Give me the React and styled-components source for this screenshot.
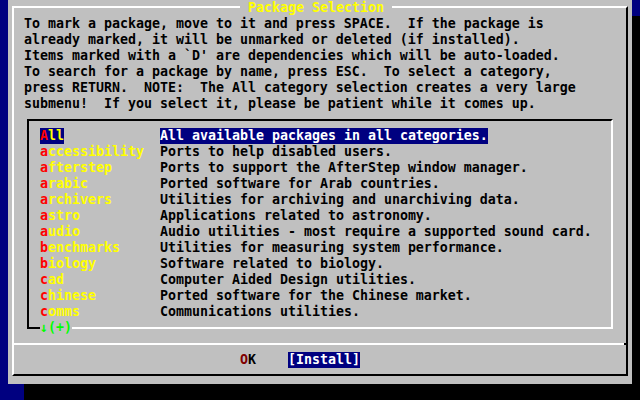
import React from 'react'
import styled, { createGlobalStyle } from 'styled-components'

const prompt = [
	'To mark a package, move to it and press SPACE.  If the package is',
	'already marked, it will be unmarked or deleted (if installed).',
	"Items marked with a `D' are dependencies which will be auto-loaded.",
	'To search for a package by name, press ESC.  To select a category,',
	'press RETURN.  NOTE:  The All category selection creates a very large',
	'submenu!  If you select it, please be patient while it comes up.'
]

const categories = [
	{ name: 'All', desc: 'All available packages in all categories.', selected: true },
	{ name: 'accessibility', desc: 'Ports to help disabled users.' },
	{ name: 'afterstep', desc: 'Ports to support the AfterStep window manager.' },
	{ name: 'arabic', desc: 'Ported software for Arab countries.' },
	{ name: 'archivers', desc: 'Utilities for archiving and unarchiving data.' },
	{ name: 'astro', desc: 'Applications related to astronomy.' },
	{ name: 'audio', desc: 'Audio utilities - most require a supported sound card.' },
	{ name: 'benchmarks', desc: 'Utilities for measuring system performance.' },
	{ name: 'biology', desc: 'Software related to biology.' },
	{ name: 'cad', desc: 'Computer Aided Design utilities.' },
	{ name: 'chinese', desc: 'Ported software for the Chinese market.' },
	{ name: 'comms', desc: 'Communications utilities.' }
]

export default function App () {
	return (
		<>
			<GlobalStyle />
			<Screen>
				<Dialog>
					<Frame>
						<Title> Package Selection </Title>
						<Prompt>{prompt.join('\n')}</Prompt>
						<ListBox>
							{categories.map(cat =>
								<Item key={cat.name}>
									<Name selected={cat.selected}>
										<Key>{cat.name[0]}</Key>{cat.name.slice(1)}
									</Name>
									<Desc selected={cat.selected}>{cat.desc}</Desc>
								</Item>
							)}
							<More>↓(+)</More>
						</ListBox>
						<Separator />
						<Buttons>
							<Button><HotKey>O</HotKey>K</Button>
							<Button active>[Install]</Button>
						</Buttons>
					</Frame>
				</Dialog>
			</Screen>
		</>
	)
}

const navy = '#000080'
const gray = '#c0c0c0'

const GlobalStyle = createGlobalStyle`
	body {
		margin: 0;
		background: ${navy};
	}
	* {
		box-sizing: border-box;
	}
`

const Screen = styled.div`
	width: 640px;
	height: 400px;
	overflow: hidden;
	background: ${navy};
	font-family: "DejaVu Sans Mono", "Liberation Mono", monospace;
	font-weight: bold;
	font-size: 13.29px;
	line-height: 16px;
	white-space: pre;
`

const Dialog = styled.div`
	width: 624px;
	margin-left: 8px;
	padding: 6px 4px 8px 4px;
	background: ${gray};
	box-shadow: 16px 16px 0 #000;
`

const Frame = styled.div`
	position: relative;
	display: flex;
	flex-direction: column;
	border: 2px solid;
	border-color: #fff #000 #000 #fff;
	padding-bottom: 6px;
`

const Title = styled.span`
	position: absolute;
	top: -8px;
	left: 226px;
	height: 16px;
	background: ${gray};
	color: #ffff00;
`

const Prompt = styled.div`
	margin: 8px 0 0 10px;
	color: #000;
`

const ListBox = styled.div`
	position: relative;
	width: 586px;
	margin: 7px 0 0 13px;
	padding: 7px 0 7px 11px;
	border: 2px solid;
	border-color: #000 #fff #fff #000;

	&::before {
		content: '';
		position: absolute;
		left: -2px;
		bottom: -2px;
		width: 13px;
		height: 2px;
		background: #000;
	}
`

const Item = styled.div`
	display: grid;
	grid-template-columns: 120px auto;
	justify-items: start;
	height: 16px;
`

const Name = styled.span`
	color: #ffff00;
	background: ${p => p.selected ? navy : 'transparent'};
`

const Key = styled.span`
	color: #ff0000;
`

const Desc = styled.span`
	color: ${p => p.selected ? '#fff' : '#000'};
	background: ${p => p.selected ? navy : 'transparent'};
`

const More = styled.span`
	position: absolute;
	left: 11px;
	bottom: -9px;
	height: 16px;
	background: ${gray};
	color: #00ff00;
`

const Separator = styled.div`
	height: 2px;
	margin-top: 14px;
	background: #fff;
	border-right: 2px solid #000;
`

const Buttons = styled.div`
	display: flex;
	gap: 32px;
	height: 16px;
	margin-top: 7px;
	padding-left: 226px;
`

const Button = styled.span`
	color: ${p => p.active ? '#fff' : '#000'};
	background: ${p => p.active ? navy : 'transparent'};
`

const HotKey = styled.span`
	color: #800000;
`
